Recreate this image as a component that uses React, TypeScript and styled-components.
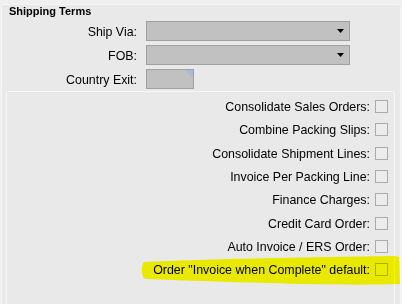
import React from 'react';
import styled, { createGlobalStyle } from 'styled-components';

const GlobalStyle = createGlobalStyle`
  html, body {
    margin: 0;
    padding: 0;
    background: #f0f0f0;
    font-family: "Liberation Sans", Arial, sans-serif;
    font-size: 12.4px;
    color: #000;
    overflow: hidden;
  }
`;

const Page = styled.div`
  width: 402px;
  height: 304px;
  padding: 4px 1px 0 1px;
  box-sizing: border-box;
  overflow: hidden;
`;

const Panel = styled.div`
  height: 310px;
  background: #e9e9e9;
  border: 1px solid #f5f5f5;
  border-radius: 3px;
  box-sizing: border-box;
`;

const Title = styled.div`
  font-size: 11px;
  font-weight: bold;
  line-height: 12px;
  padding: 0 0 4px 7px;
`;

const FormGrid = styled.div`
  display: grid;
  grid-template-columns: 135px auto;
  column-gap: 9px;
  row-gap: 4px;
  align-items: center;
`;

const Label = styled.label`
  height: 20px;
  text-align: right;
  line-height: 23px;
  white-space: nowrap;
`;

const Select = styled.div`
  width: 204px;
  height: 20px;
  box-sizing: border-box;
  background: #c1c1c1;
  border: 1px solid #a0a0a0;
  display: flex;
  align-items: center;
  justify-content: flex-end;
  padding-right: 5px;
`;

const CountryBox = styled.div`
  position: relative;
  width: 48px;
  height: 20px;
  box-sizing: border-box;
  background: #c1c1c1;
  border: 1px solid #a0a0a0;
  overflow: hidden;

  &::after {
    content: '';
    position: absolute;
    top: 0;
    right: 0;
    border-top: 8px solid #a8bcd6;
    border-left: 8px solid transparent;
  }
`;

const Options = styled.div`
  margin: 2px 5px 0 4px;
  height: 230px;
  background: #e9e9e9;
  border: 1px solid #f7f7f7;
  border-radius: 3px;
  padding: 3px 6px 0 0;
`;

const OptionRow = styled.div`
  position: relative;
  height: 23.33px;
  display: flex;
  align-items: center;
  justify-content: flex-end;
  gap: 5px;
`;

const OptionLabel = styled.span`
  position: relative;
  z-index: 1;
  padding-top: 1px;
  white-space: nowrap;
`;

const Checkbox = styled.span`
  width: 13px;
  height: 13px;
  box-sizing: border-box;
  background: #ececec;
  border: 1px solid #ababab;
`;

const Highlight = styled.svg`
  position: absolute;
  right: -13px;
  top: -3px;
  z-index: 2;
  mix-blend-mode: multiply;
  pointer-events: none;
`;

function Arrow() {
  return (
    <svg width="7" height="4" viewBox="0 0 7 4">
      <path d="M0 0 H7 L3.5 4 Z" fill="#000" />
    </svg>
  );
}

const options = [
  'Consolidate Sales Orders:',
  'Combine Packing Slips:',
  'Consolidate Shipment Lines:',
  'Invoice Per Packing Line:',
  'Finance Charges:',
  'Credit Card Order:',
  'Auto Invoice / ERS Order:',
];

export default function App() {
  return (
    <>
      <GlobalStyle />
      <Page>
        <Panel>
          <Title>Shipping Terms</Title>
          <FormGrid>
            <Label>Ship Via:</Label>
            <Select><Arrow /></Select>
            <Label>FOB:</Label>
            <Select><Arrow /></Select>
            <Label>Country Exit:</Label>
            <CountryBox />
          </FormGrid>
          <Options>
            {options.map((o) => (
              <OptionRow key={o}>
                <OptionLabel>{o}</OptionLabel>
                <Checkbox />
              </OptionRow>
            ))}
            <OptionRow>
              <OptionLabel>Order "Invoice when Complete" default:</OptionLabel>
              <Checkbox />
              <Highlight width="260" height="31" viewBox="0 0 260 31">
                <path
                  d="M3 7 C60 4, 180 2, 254 1 L258 2 L259 29 C200 31, 120 28, 4 24 C0 21, 0 10, 3 7 Z"
                  fill="#ffff00"
                />
              </Highlight>
            </OptionRow>
          </Options>
        </Panel>
      </Page>
    </>
  );
}
